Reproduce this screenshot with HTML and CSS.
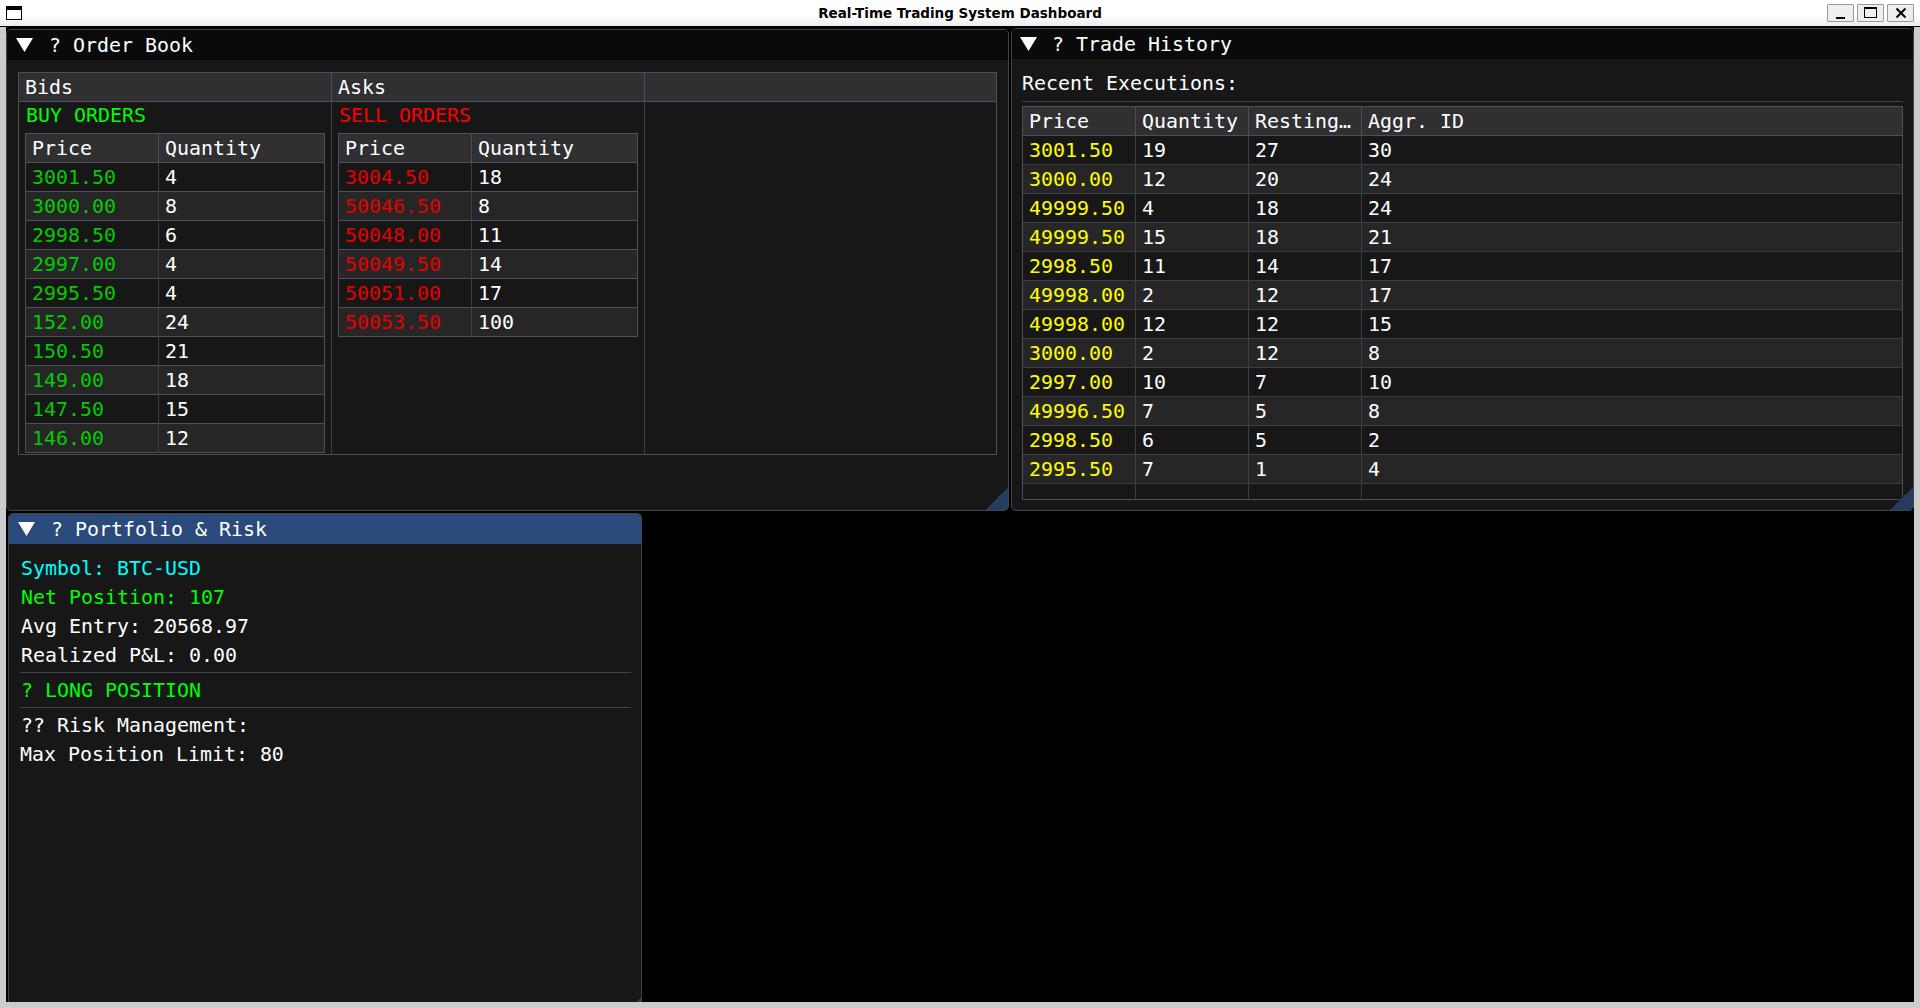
FILE: index.html
```html
<!DOCTYPE html>
<html>

<head>
    <meta charset="UTF-8">
    <title>Real-Time Trading System Dashboard</title>
    <link rel="stylesheet" href="styles.css">
</head>

<body>
    <header class="titlebar">
        <svg class="app-icon" width="18" height="14" viewBox="0 0 18 14">
            <rect x="0.5" y="0.5" width="15" height="13" fill="#fff" stroke="#000" />
            <rect x="0" y="0" width="16" height="4" fill="#000" />
        </svg>
        <span class="titlebar-text">Real-Time Trading System Dashboard</span>
        <div class="win-buttons">
            <div class="win-button">
                <svg width="14" height="14" viewBox="0 0 14 14"><rect x="2" y="11" width="9" height="2" fill="#000" /></svg>
            </div>
            <div class="win-button">
                <svg width="14" height="12" viewBox="0 0 14 12"><rect x="0.5" y="0.5" width="12" height="10" fill="none" stroke="#000" /><rect x="0" y="0" width="13" height="2" fill="#000" /></svg>
            </div>
            <div class="win-button">
                <svg width="12" height="12" viewBox="0 0 12 12"><path d="M1.5 1.5 L10.5 10.5 M10.5 1.5 L1.5 10.5" stroke="#000" stroke-width="2" fill="none" /></svg>
            </div>
        </div>
    </header>

    <main class="frame">
        <div class="desktop">

            <!-- Order Book -->
            <section class="window window-orders">
                <div class="window-title">
                    <svg class="arrow" width="17" height="14" viewBox="0 0 17 14"><polygon points="0,0 17,0 8.5,14" fill="#fff" /></svg>
                    <span>? Order Book</span>
                </div>
                <div class="window-body">
                    <table class="table book">
                        <thead>
                            <tr>
                                <th class="col-side">Bids</th>
                                <th class="col-side">Asks</th>
                                <th></th>
                            </tr>
                        </thead>
                        <tbody>
                            <tr>
                                <td class="side-cell">
                                    <div class="side-label green">BUY ORDERS</div>
                                    <table class="table levels">
                                        <thead>
                                            <tr><th class="col-price">Price</th><th>Quantity</th></tr>
                                        </thead>
                                        <tbody>
                                            <tr><td class="bid">3001.50</td><td>4</td></tr>
                                            <tr class="alt"><td class="bid">3000.00</td><td>8</td></tr>
                                            <tr><td class="bid">2998.50</td><td>6</td></tr>
                                            <tr class="alt"><td class="bid">2997.00</td><td>4</td></tr>
                                            <tr><td class="bid">2995.50</td><td>4</td></tr>
                                            <tr class="alt"><td class="bid">152.00</td><td>24</td></tr>
                                            <tr><td class="bid">150.50</td><td>21</td></tr>
                                            <tr class="alt"><td class="bid">149.00</td><td>18</td></tr>
                                            <tr><td class="bid">147.50</td><td>15</td></tr>
                                            <tr class="alt"><td class="bid">146.00</td><td>12</td></tr>
                                        </tbody>
                                    </table>
                                </td>
                                <td class="side-cell">
                                    <div class="side-label red">SELL ORDERS</div>
                                    <table class="table levels levels-ask">
                                        <thead>
                                            <tr><th class="col-price">Price</th><th>Quantity</th></tr>
                                        </thead>
                                        <tbody>
                                            <tr><td class="ask">3004.50</td><td>18</td></tr>
                                            <tr class="alt"><td class="ask">50046.50</td><td>8</td></tr>
                                            <tr><td class="ask">50048.00</td><td>11</td></tr>
                                            <tr class="alt"><td class="ask">50049.50</td><td>14</td></tr>
                                            <tr><td class="ask">50051.00</td><td>17</td></tr>
                                            <tr class="alt"><td class="ask">50053.50</td><td>100</td></tr>
                                        </tbody>
                                    </table>
                                </td>
                                <td></td>
                            </tr>
                        </tbody>
                    </table>
                </div>
                <div class="grip"></div>
            </section>

            <!-- Trade History -->
            <section class="window window-trades">
                <div class="window-title">
                    <svg class="arrow" width="17" height="14" viewBox="0 0 17 14"><polygon points="0,0 17,0 8.5,14" fill="#fff" /></svg>
                    <span>? Trade History</span>
                </div>
                <div class="window-body">
                    <div class="section-text">Recent Executions:</div>
                    <div class="rule"></div>
                    <table class="table trades">
                        <thead>
                            <tr><th>Price</th><th>Quantity</th><th>Resting…</th><th>Aggr. ID</th></tr>
                        </thead>
                        <tbody>
                            <tr><td class="yellow">3001.50</td><td>19</td><td>27</td><td>30</td></tr>
                            <tr class="alt"><td class="yellow">3000.00</td><td>12</td><td>20</td><td>24</td></tr>
                            <tr><td class="yellow">49999.50</td><td>4</td><td>18</td><td>24</td></tr>
                            <tr class="alt"><td class="yellow">49999.50</td><td>15</td><td>18</td><td>21</td></tr>
                            <tr><td class="yellow">2998.50</td><td>11</td><td>14</td><td>17</td></tr>
                            <tr class="alt"><td class="yellow">49998.00</td><td>2</td><td>12</td><td>17</td></tr>
                            <tr><td class="yellow">49998.00</td><td>12</td><td>12</td><td>15</td></tr>
                            <tr class="alt"><td class="yellow">3000.00</td><td>2</td><td>12</td><td>8</td></tr>
                            <tr><td class="yellow">2997.00</td><td>10</td><td>7</td><td>10</td></tr>
                            <tr class="alt"><td class="yellow">49996.50</td><td>7</td><td>5</td><td>8</td></tr>
                            <tr><td class="yellow">2998.50</td><td>6</td><td>5</td><td>2</td></tr>
                            <tr class="alt"><td class="yellow">2995.50</td><td>7</td><td>1</td><td>4</td></tr>
                            <tr class="stub"><td></td><td></td><td></td><td></td></tr>
                        </tbody>
                    </table>
                </div>
                <div class="grip"></div>
            </section>

            <!-- Portfolio & Risk -->
            <section class="window window-portfolio">
                <div class="window-title window-title-active">
                    <svg class="arrow" width="17" height="14" viewBox="0 0 17 14"><polygon points="0,0 17,0 8.5,14" fill="#fff" /></svg>
                    <span>? Portfolio &amp; Risk</span>
                </div>
                <div class="window-body">
                    <div class="line cyan">Symbol: BTC-USD</div>
                    <div class="line green">Net Position: 107</div>
                    <div class="line">Avg Entry: 20568.97</div>
                    <div class="line">Realized P&amp;L: 0.00</div>
                    <div class="rule rule-first"></div>
                    <div class="line line-tight green">? LONG POSITION</div>
                    <div class="rule"></div>
                    <div class="line line-risk">?? Risk Management:</div>
                    <div class="line line-max">Max Position Limit: 80</div>
                </div>
                <div class="grip grip-small"></div>
            </section>

        </div>
    </main>
</body>

</html>
```

FILE: styles.css
```css
* {
    box-sizing: border-box;
}

html,
body {
    margin: 0;
    height: 100%;
}

body {
    display: flex;
    flex-direction: column;
    overflow: hidden;
    background-color: #cccccc;
    font-family: "DejaVu Sans Mono", monospace;
    font-size: 19.93px;
    color: #ffffff;
}

/* window manager title bar */
.titlebar {
    position: relative;
    display: flex;
    align-items: center;
    height: 27px;
    padding: 0 6px;
    background: linear-gradient(#ffffff 55%, #ececec);
    border-bottom: 1px solid #000000;
    color: #000000;
}

.titlebar-text {
    position: absolute;
    left: 0;
    right: 0;
    text-align: center;
    font-family: "DejaVu Sans", sans-serif;
    font-size: 13.5px;
    font-weight: bold;
}

.win-buttons {
    display: flex;
    gap: 3px;
    margin-left: auto;
}

.win-button {
    display: flex;
    align-items: center;
    justify-content: center;
    width: 27px;
    height: 18px;
    background-color: #eeeeee;
    border: 1px solid #999999;
    border-radius: 1px;
}

.frame {
    flex: 1;
    padding: 0 6px 6px;
}

.desktop {
    position: relative;
    height: 100%;
    background-color: #000000;
    overflow: hidden;
}

/* panels */
.window {
    position: absolute;
    display: flex;
    flex-direction: column;
    background-color: #171717;
    border: 1px solid #43434d;
    border-radius: 5px;
    overflow: hidden;
}

.window-orders {
    left: 0;
    top: 2px;
    width: 1003px;
    height: 482px;
}

.window-trades {
    left: 1005px;
    top: 1px;
    width: 903px;
    height: 483px;
}

.window-portfolio {
    left: 2px;
    top: 486px;
    width: 634px;
    height: 489px;
    border-bottom: none;
    border-radius: 5px 5px 0 0;
}

.window-title {
    display: flex;
    align-items: center;
    flex-shrink: 0;
    gap: 16px;
    height: 30px;
    padding: 0 0 0 9px;
    background-color: #0a0a0a;
    white-space: pre;
}

.window-trades .window-title {
    padding-left: 8px;
    gap: 15px;
}

.window-title-active {
    background-color: #294a7a;
}

.window-body {
    flex: 1;
    padding: 12px 10px 0 11px;
}

.window-trades .window-body {
    padding: 9px 10px 0;
}

.window-portfolio .window-body {
    padding: 10px 10px 0 11px;
}

.grip {
    position: absolute;
    right: 0;
    bottom: 0;
    width: 23px;
    height: 23px;
    background: linear-gradient(135deg, transparent 50%, #243c60 50%);
}

.grip-small {
    width: 4px;
    height: 4px;
}

/* tables */
.table {
    table-layout: fixed;
    border-collapse: separate;
    border-spacing: 0;
    border-top: 1px solid #4f4f59;
    border-left: 1px solid #4f4f59;
}

.table th,
.table td {
    height: 29px;
    padding: 1px 6px 0;
    text-align: left;
    font-weight: normal;
    line-height: 20px;
    border-right: 1px solid #3d3d44;
    border-bottom: 1px solid #3d3d44;
}

.table th {
    background-color: #303033;
    border-right-color: #4f4f59;
    border-bottom-color: #4f4f59;
}

.table th:last-child,
.table td:last-child {
    border-right-color: #4f4f59;
}

.table tbody tr:last-child td {
    border-bottom-color: #4f4f59;
}

.alt td {
    background-color: #262626;
}

.book {
    width: 979px;
    height: 383px;
}

.book .col-side {
    width: 313px;
}

.book > tbody > tr > td {
    vertical-align: top;
    padding: 0;
    border-right-color: #3d3d44;
    border-bottom-color: #4f4f59;
}

.book > tbody > tr > td:last-child {
    border-right-color: #4f4f59;
}

.side-cell {
    padding: 0 !important;
}

.side-label {
    height: 31px;
    padding: 0 0 0 7px;
    line-height: 27px;
}

.levels {
    width: 300px;
    margin-left: 6px;
}

.levels .col-price {
    width: 133px;
}

.trades {
    width: 881px;
    margin-top: 4px;
}

.trades th {
    width: 113px;
}

.trades th:last-child {
    width: auto;
}

.table .stub td {
    height: 16px;
    padding: 0;
}

.section-text {
    height: 33px;
    line-height: 32px;
}

.rule {
    height: 1px;
    background-color: #43434d;
}

/* portfolio lines */
.line {
    height: 29px;
    padding-left: 1px;
    line-height: 29px;
}

.line-tight {
    height: 34px;
    line-height: 35px;
}

.line-risk {
    height: 32px;
    line-height: 35px;
}

.line-max {
    padding-left: 0;
}

.rule-first {
    margin-top: 2px;
}

.green {
    color: #00ff00;
}

.red {
    color: #ff0000;
}

.cyan {
    color: #00ffff;
}

.yellow {
    color: #ffff00;
}

.bid {
    color: #00cc00;
}

.ask {
    color: #e60000;
}
```
